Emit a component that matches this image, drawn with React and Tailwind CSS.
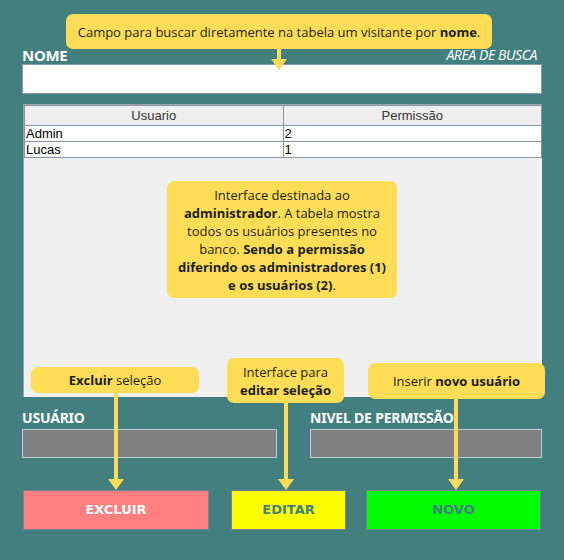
import React from "react";

const Arrow = ({ x, top, bottom }) => (
  <div
    className="absolute flex flex-col items-center"
    style={{ left: x - 8, top, height: bottom - top, width: 16 }}
  >
    <div className="w-[4px] flex-1 bg-[#ffdb58]" />
    <div className="w-0 h-0 border-l-[8px] border-r-[8px] border-t-[11px] border-l-transparent border-r-transparent border-t-[#ffdb58]" />
  </div>
);

const Tip = ({ className, children }) => (
  <div
    className={`absolute bg-[#ffdd57] rounded-[7px] text-[13px] leading-[18px] text-[#1d1d1d] text-center flex flex-col items-center justify-center font-['Open_Sans',sans-serif] ${className}`}
  >
    {children}
  </div>
);

export default function App() {
  return (
    <div className="relative w-[564px] h-[560px] bg-[#427f7e] overflow-hidden">
      <div className="pl-[22px] pr-[22px] pt-[44px]">
        {/* busca */}
        <div className="flex items-end justify-between h-[20px]">
          <span className="text-white font-bold text-[15px] leading-[18px] font-['Noto_Sans',sans-serif] tracking-[-0.3px]">
            NOME
          </span>
          <span className="text-white italic text-[14px] leading-[18px] font-['Open_Sans',sans-serif] pr-[5px] tracking-[-0.4px]">
            AREA DE BUSCA
          </span>
        </div>
        <div className="h-[30px] bg-white border border-[#8a9aa8]" />

        {/* tabela */}
        <div className="mt-[10px] h-[293px] bg-[#f0f0f0] border-l border-t border-[#a5a5a5] ml-px">
          <table className="w-full border-collapse font-['Liberation_Sans',Arial,sans-serif] text-[13px] leading-[15px]">
            <thead>
              <tr className="bg-[#eeeeee] h-[20px]">
                <th className="font-normal text-[#333] border border-[#8696a4] w-1/2">Usuario</th>
                <th className="font-normal text-[#333] border border-[#8696a4]">Permissão</th>
              </tr>
            </thead>
            <tbody>
              {[
                ["Admin", "2"],
                ["Lucas", "1"],
              ].map(([u, p]) => (
                <tr key={u} className="bg-white h-[16px]">
                  <td className="border border-[#8696a4] px-px text-black">{u}</td>
                  <td className="border border-[#8696a4] px-px text-black">{p}</td>
                </tr>
              ))}
            </tbody>
          </table>
        </div>

        {/* campos */}
        <div className="flex gap-[33px] mt-[12px] font-['Noto_Sans',sans-serif]">
          <div className="w-[255px]">
            <div className="text-white font-bold text-[14px] leading-[18px] tracking-[-0.2px]">USUÁRIO</div>
            <div className="mt-[2px] h-[29px] bg-[#808080] border border-[#b8cfe0]" />
          </div>
          <div className="w-[232px]">
            <div className="text-white font-bold text-[14px] leading-[18px] tracking-[-0.2px]">NIVEL DE PERMISSÃO</div>
            <div className="mt-[2px] h-[29px] bg-[#808080] border border-[#b8cfe0]" />
          </div>
        </div>

        {/* botões */}
        <div className="flex mt-[32px] ml-px font-['DejaVu_Sans',sans-serif] font-bold text-[13px]">
          <button className="w-[186px] h-[40px] bg-[#ff8080] border border-[#6f8393] text-white">EXCLUIR</button>
          <button className="ml-[22px] w-[115px] h-[40px] bg-[#ffff00] border border-[#6f8393] text-[#427f7e]">EDITAR</button>
          <button className="ml-[20px] w-[175px] h-[40px] bg-[#00ff00] border border-[#6f8393] text-[#427f7e]">NOVO</button>
        </div>
      </div>

      {/* anotações */}
      <Arrow x={279} top={49} bottom={70} />
      <Tip className="left-[66px] top-[14px] w-[426px] h-[35px] text-[13.3px]">
        <div>Campo para buscar diretamente na tabela um visitante por <b>nome</b>.</div>
      </Tip>

      <Tip className="left-[167px] top-[181px] w-[230px] h-[117px] leading-[17.5px] text-[13.3px]">
        <div>Interface destinada ao</div>
        <div><b>administrador</b>. A tabela mostra</div>
        <div>todos os usuários presentes no</div>
        <div>banco. <b>Sendo a permissão</b></div>
        <div><b>diferindo os administradores (1)</b></div>
        <div><b>e os usuários (2)</b>.</div>
      </Tip>

      <Arrow x={116} top={392} bottom={490} />
      <Tip className="left-[31px] top-[367px] w-[168px] h-[26px]">
        <div><b>Excluir</b> seleção</div>
      </Tip>

      <Arrow x={286} top={400} bottom={490} />
      <Tip className="left-[227px] top-[358px] w-[117px] h-[45px]">
        <div>Interface para</div>
        <div><b>editar seleção</b></div>
      </Tip>

      <Arrow x={456} top={396} bottom={490} />
      <Tip className="left-[368px] top-[363px] w-[177px] h-[36px]">
        <div>Inserir <b>novo usuário</b></div>
      </Tip>
    </div>
  );
}
